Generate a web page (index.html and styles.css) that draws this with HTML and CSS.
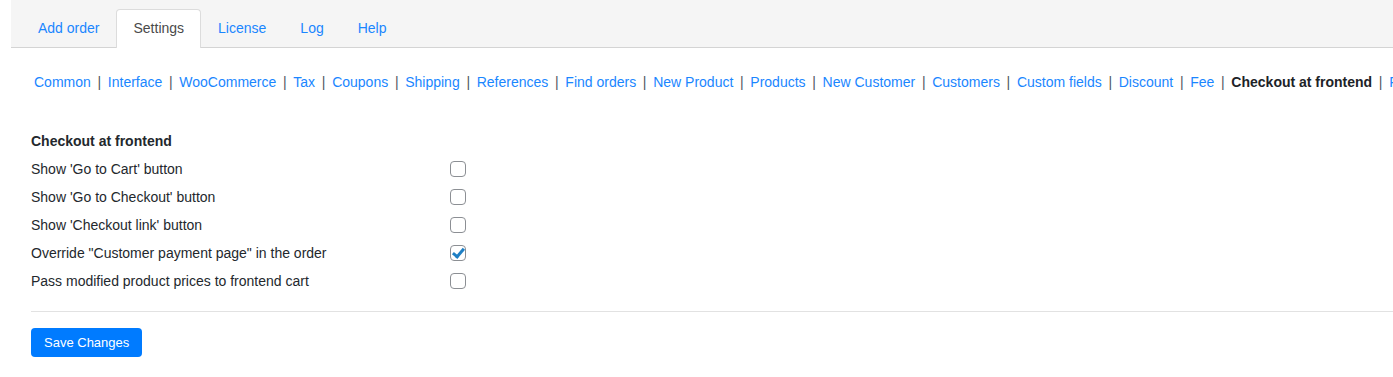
FILE: index.html
```html
<!DOCTYPE html>
<html lang="en">
<head>
    <meta charset="UTF-8">
    <meta name="viewport" content="width=device-width, initial-scale=1.0">
    <title>Phone Orders - Settings</title>
    <link rel="stylesheet" href="styles.css">
</head>

<body>
    <div class="wrap">
        <!-- main tabs -->
        <div class="tabs">
            <a href="#" class="tab">Add order</a>
            <a href="#" class="tab active">Settings</a>
            <a href="#" class="tab">License</a>
            <a href="#" class="tab">Log</a>
            <a href="#" class="tab">Help</a>
        </div>

        <!-- settings sections -->
        <div class="subnav">
            <a href="#">Common</a><span class="sep">|</span>
            <a href="#">Interface</a><span class="sep">|</span>
            <a href="#">WooCommerce</a><span class="sep">|</span>
            <a href="#">Tax</a><span class="sep">|</span>
            <a href="#">Coupons</a><span class="sep">|</span>
            <a href="#">Shipping</a><span class="sep">|</span>
            <a href="#">References</a><span class="sep">|</span>
            <a href="#">Find orders</a><span class="sep">|</span>
            <a href="#">New Product</a><span class="sep">|</span>
            <a href="#">Products</a><span class="sep">|</span>
            <a href="#">New Customer</a><span class="sep">|</span>
            <a href="#">Customers</a><span class="sep">|</span>
            <a href="#">Custom fields</a><span class="sep">|</span>
            <a href="#">Discount</a><span class="sep">|</span>
            <a href="#">Fee</a><span class="sep">|</span>
            <span class="current">Checkout at frontend</span><span class="sep">|</span>
            <a href="#">Frontend page</a>
        </div>

        <form class="settings">
            <h3 class="section-title">Checkout at frontend</h3>
            <div class="options">
                <label for="opt1">Show 'Go to Cart' button</label>
                <input type="checkbox" id="opt1">
                <label for="opt2">Show 'Go to Checkout' button</label>
                <input type="checkbox" id="opt2">
                <label for="opt3">Show 'Checkout link' button</label>
                <input type="checkbox" id="opt3">
                <label for="opt4">Override "Customer payment page" in the order</label>
                <input type="checkbox" id="opt4" checked>
                <label for="opt5">Pass modified product prices to frontend cart</label>
                <input type="checkbox" id="opt5">
            </div>
            <hr class="divider">
            <button type="button" class="save-btn">Save Changes</button>
        </form>
    </div>
</body>
</html>
```

FILE: styles.css
```css
body {
    font-family: 'Liberation Sans', Arial, sans-serif;
    font-size: 14px;
    color: #23282d;
    background-color: #fff;
    margin: 0;
    overflow: hidden;
}

.wrap {
    margin-left: 11px;
}

.tabs {
    display: flex;
    background-color: #f5f5f5;
    border-bottom: 1px solid #d4d4d4;
    padding: 9px 0 0 10px;
    height: 38px;
}

.tab {
    display: block;
    height: 38px;
    line-height: 36px;
    padding: 0 16px;
    color: #1a86ff;
    text-decoration: none;
    border: 1px solid transparent;
    border-bottom: none;
    box-sizing: border-box;
}

.tab.active {
    background-color: #fff;
    color: #4a4a4a;
    border-color: #dcdcdc;
    border-radius: 4px 4px 0 0;
    height: 39px;
    margin-bottom: -1px;
}

.subnav {
    display: flex;
    white-space: nowrap;
    margin-top: 24px;
    padding-left: 23px;
    line-height: 20px;
}

.subnav a {
    color: #1a86ff;
    text-decoration: none;
}

.subnav .sep {
    color: #50575e;
    margin: 0 6.7px;
}

.subnav .current {
    font-weight: bold;
    color: #1d2327;
}

.settings {
    padding-left: 20px;
    margin-top: 35px;
}

.section-title {
    font-size: 14px;
    font-weight: bold;
    margin: 0;
    line-height: 28px;
}

.options {
    display: grid;
    grid-template-columns: 419px 16px;
    grid-auto-rows: 28px;
    align-items: center;
}

.options input[type="checkbox"] {
    appearance: none;
    -webkit-appearance: none;
    width: 16px;
    height: 16px;
    margin: 0;
    border: 1px solid #8c8f94;
    border-radius: 4px;
    background-color: #fff;
    position: relative;
    cursor: pointer;
}

.options input[type="checkbox"]:checked::before {
    content: "";
    position: absolute;
    left: 4px;
    top: 0px;
    width: 4px;
    height: 9px;
    border-right: 3px solid #1e7fc4;
    border-bottom: 3px solid #1e7fc4;
    transform: rotate(40deg);
}

.divider {
    border: none;
    border-top: 1px solid #e2e2e2;
    margin: 16px 0 16px 0;
}

.save-btn {
    font-family: 'Liberation Sans', Arial, sans-serif;
    font-size: 13px;
    color: #fff;
    background-color: #007bff;
    border: none;
    border-radius: 4px;
    height: 29px;
    padding: 0 13px;
    cursor: pointer;
}
```
